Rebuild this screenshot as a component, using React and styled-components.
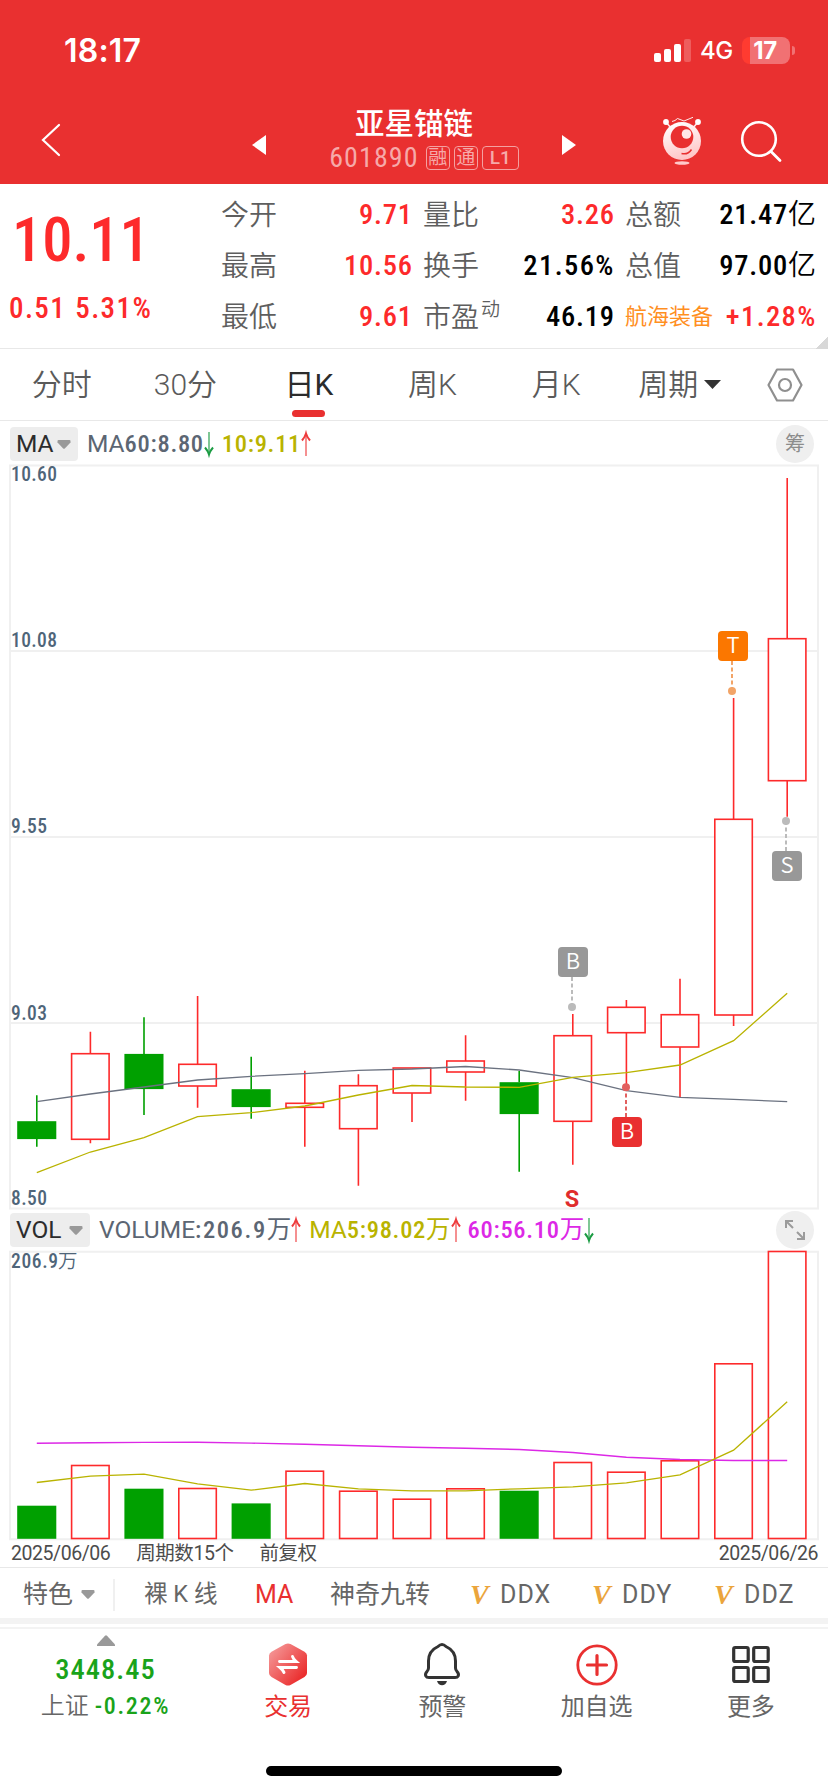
import React from 'react';
import styled, { createGlobalStyle, css } from 'styled-components';

const RED = '#fd2a2b';
const GREEN = '#00a000';
const OLIVE = '#b9b300';
const SLATE = '#5c6673';
const PURPLE = '#dc28e6';

const GlobalStyle = createGlobalStyle`
  * {
    box-sizing: border-box;
  }

  body {
    margin: 0;
    background: #fff;
    font-family: Roboto, 'Noto Sans CJK SC', sans-serif;
    line-height: 1.2;
    color: #666;
    white-space: nowrap;
  }

  svg {
    display: block;
    flex-shrink: 0;
    overflow: visible;
  }
`;

// narrow digits, used for every price and volume
const digits = css`
  font-stretch: 87%;
  font-weight: 500;
`;

const Screen = styled.div`
  width: 828px;
  height: 1792px;
  display: flex;
  flex-direction: column;
  overflow: hidden;
`;

/* ---- header ---- */

const Header = styled.header`
  height: 184px;
  background: #e93030;
  color: #fff;
`;

const StatusBar = styled.div`
  height: 98px;
  padding: 3px 33px 0 64px;
  display: flex;
  align-items: center;
  font-family: Inter, sans-serif;
`;

const Clock = styled.div`
  flex: 1;
  padding-top: 1px;
  font-size: 32px;
  font-weight: 600;
  letter-spacing: 0.2px;
`;

const Network = styled.div`
  margin: 1px 9px 0 9px;
  font-size: 24px;
  font-weight: 500;
  letter-spacing: -0.3px;
`;

const Battery = styled.div`
  width: 48px;
  height: 27px;
  margin-top: -1px;
  border-radius: 8px;
  background: linear-gradient(90deg, #ff3b30 8px, #f17173 8px);
  font-size: 24px;
  font-weight: 700;
  line-height: 27px;
  text-align: center;
  letter-spacing: -0.5px;
  padding-right: 2px;
`;

const BatteryCap = styled.div`
  width: 3px;
  height: 9px;
  margin-left: 2px;
  border-radius: 0 4px 4px 0;
  background: #f17173;
`;

const TitleBar = styled.div`
  height: 86px;
  display: grid;
  grid-template-columns: 252px 14px 296px 14px 1fr 126px;
  align-items: center;
`;

const BackCell = styled.div`
  padding-left: 41px;
`;

const StockTitle = styled.div`
  text-align: center;
  padding-bottom: 3px;
`;

const StockName = styled.div`
  height: 36px;
  font-size: 29.5px;
  font-weight: 500;
  line-height: 36px;
`;

const StockCode = styled.div`
  display: flex;
  justify-content: center;
  align-items: center;
  height: 31px;
  font-size: 28px;
  font-stretch: 87%;
  padding-left: 20px;
  color: #f6a9a9;
  letter-spacing: 1.1px;
`;

const Tag = styled.span`
  height: 24px;
  margin-left: 4px;
  padding: 0 ${(p) => (p.$wide ? 7 : 1.5)}px;
  border: 1px solid #f4a0a0;
  border-radius: 4px;
  font-size: 19px;
  font-stretch: 100%;
  font-weight: ${(p) => (p.$wide ? 500 : 400)};
  line-height: 22px;
  letter-spacing: 0;

  &:first-of-type {
    margin-left: 7px;
  }
`;

const ActionCell = styled.div`
  display: flex;
  justify-content: ${(p) => (p.$end ? 'flex-end' : 'flex-start')};
  padding-left: ${(p) => (p.$end ? 0 : 39)}px;
`;

/* ---- quote ---- */

const Quote = styled.section`
  position: relative;
  height: 165px;
  display: flex;
  border-bottom: 1px solid #e8e8e8;
`;

const PriceBox = styled.div`
  width: 221px;
  padding-left: 9px;
  color: ${RED};
`;

const Price = styled.div`
  ${digits}
  height: 64px;
  margin-top: 25px;
  padding-left: 3px;
  font-size: 60.5px;
  line-height: 64px;
`;

const Change = styled.div`
  ${digits}
  margin-top: 17px;
  font-size: 29px;
  line-height: 36px;
  letter-spacing: 1.4px;
  word-spacing: 1px;
`;

const QuoteGrid = styled.div`
  display: grid;
  grid-template-columns: repeat(3, 190px);
  grid-auto-rows: 51px;
  column-gap: 12px;
  padding-top: 6px;
`;

const QuoteItem = styled.div`
  display: flex;
  justify-content: space-between;
  align-items: center;
`;

const QuoteLabel = styled.span`
  font-size: ${(p) => (p.$sector ? 22 : 28)}px;
  font-weight: ${(p) => (p.$sector ? 400 : 350)};
  color: ${(p) => (p.$sector ? '#ff8f1f' : '#5e5e5e')};

  sup {
    font-size: 19px;
    line-height: 0;
    margin-left: 2px;
  }
`;

const QuoteValue = styled.span`
  ${digits}
  margin-right: -1.8px;
  font-size: 28.5px;
  letter-spacing: ${(p) => (p.$percent ? 1.4 : 0.75)}px;
  color: ${(p) => (p.$up ? RED : '#000')};
`;

const Unit = styled.span`
  font-size: 28px;
  font-weight: 350;
`;

const Corner = styled.div`
  position: absolute;
  right: 0;
  bottom: -1px;
  width: 13px;
  height: 13px;
  background: linear-gradient(135deg, transparent 50%, #d8d8d8 50%);
`;

/* ---- period tabs ---- */

const Tabs = styled.nav`
  height: 72px;
  display: flex;
  align-items: center;
  border-bottom: 1px solid #e8e8e8;
`;

const Tab = styled.div`
  position: relative;
  width: 123.6px;
  height: 71px;
  display: flex;
  align-items: center;
  justify-content: center;
  gap: 6px;
  font-size: 30px;
  font-weight: 350;
  color: #5a5a5a;

  ${(p) =>
    p.$active &&
    css`
      font-weight: 400;
      color: #2c2c2c;

      &::after {
        content: '';
        position: absolute;
        left: 45px;
        bottom: 3px;
        width: 33px;
        height: 7px;
        border-radius: 4px;
        background: #e93030;
      }
    `}
`;

const TabIcon = styled.div`
  flex: 1;
  display: flex;
  justify-content: center;
`;

/* ---- indicator rows ---- */

const IndicatorRow = styled.div`
  height: ${(p) => p.$height}px;
  padding: ${(p) => p.$top || 0}px 14px 0 10px;
  display: flex;
  align-items: center;
  font-size: 24.5px;
`;

const Picker = styled.div`
  width: ${(p) => p.$width}px;
  height: 34px;
  padding: 0 7px 0 6px;
  margin-right: 9px;
  display: flex;
  align-items: center;
  justify-content: space-between;
  border-radius: 4px;
  background: #ededed;
  color: #2c2c2c;
`;

const Reading = styled.div`
  display: flex;
  align-items: center;
  margin-right: ${(p) => p.$gap ?? 8}px;
  font-weight: ${(p) => (p.$strong ? 500 : 400)};
  color: ${(p) => p.$color};
`;

const ReadingValue = styled.span`
  ${digits}
  letter-spacing: ${(p) => p.$spacing ?? 0.7}px;
`;

const RoundButton = styled.div`
  position: relative;
  z-index: 1;
  width: 38px;
  height: 38px;
  margin-left: auto;
  display: flex;
  align-items: center;
  justify-content: center;
  border-radius: 50%;
  background: #efefef;
  font-size: 20px;
  color: #8c8c8c;
`;

/* ---- dates and features ---- */

const DateRow = styled.div`
  height: 28px;
  padding: 0 10px 0 11px;
  display: flex;
  align-items: center;
  font-size: 19.5px;
  font-weight: 400;
  letter-spacing: -0.45px;
  color: #4c4c4c;
  border-bottom: 1px solid #e8e8e8;

  span + span {
    margin-left: 26px;
  }

  span:last-child {
    margin-left: auto;
  }
`;

const FeatureRow = styled.div`
  height: 50px;
  padding: 3px 0 0 23px;
  display: flex;
  align-items: center;
  font-size: 25px;
  color: #666;
`;

const Special = styled.div`
  width: 92px;
  height: 32px;
  margin-right: 29px;
  display: flex;
  align-items: center;
  gap: 8px;
  border-right: 2px solid #f0f0f0;
`;

const Feature = styled.div`
  display: flex;
  flex-shrink: 0;
  align-items: center;
  width: ${(p) => p.$width}px;
  font-size: ${(p) => p.$size || 25}px;
  letter-spacing: ${(p) => p.$spacing || 0}px;
  color: ${(p) => (p.$active ? '#e93030' : 'inherit')};
`;

const VipMark = styled.span`
  width: 30px;
  font-family: 'Liberation Serif', serif;
  font-size: 28px;
  font-weight: 700;
  font-style: italic;
  color: #eba53c;
`;

const Divider = styled.div`
  height: 11px;
  border-top: 6px solid #f3f3f3;
  border-bottom: 2px solid #f3f3f3;
`;

/* ---- bottom nav ---- */

const BottomNav = styled.nav`
  flex: 1;
  display: grid;
  grid-template-columns: 211px repeat(4, 1fr);
  align-items: start;
`;

const IndexBox = styled.div`
  display: flex;
  flex-direction: column;
  align-items: center;
  padding-top: 6px;
`;

const IndexValue = styled.div`
  ${digits}
  height: 40px;
  margin-top: 4px;
  font-size: 28.5px;
  line-height: 40px;
  letter-spacing: 1px;
  color: #1aa31a;
`;

const IndexChange = styled.div`
  margin-top: -1px;
  font-size: 24px;
  font-weight: 350;
  line-height: 34px;

  b {
    ${digits}
    letter-spacing: 1.7px;
    color: #1aa31a;
  }
`;

const NavItem = styled.div`
  display: flex;
  flex-direction: column;
  align-items: center;
  padding-top: 14px;
  font-size: 24px;
  line-height: 34px;
  color: ${(p) => (p.$active ? '#e93030' : '#666')};

  svg {
    margin-bottom: 4px;
  }
`;

const HomeBar = styled.div`
  width: 296px;
  height: 10px;
  margin: 0 auto 16px;
  border-radius: 5px;
  background: #000;
`;

/* ---- data ---- */

const QUOTES = [
  { label: '今开', value: '9.71', up: true },
  { label: '量比', value: '3.26', up: true },
  { label: '总额', value: '21.47', unit: '亿' },
  { label: '最高', value: '10.56', up: true },
  { label: '换手', value: '21.56%' },
  { label: '总值', value: '97.00', unit: '亿' },
  { label: '最低', value: '9.61', up: true },
  { label: '市盈', sup: '动', value: '46.19' },
  { label: '航海装备', value: '+1.28%', up: true, sector: true },
];

// high, body top, body bottom, low, volume top, falling day
const CANDLES = [
  [1095.3, 1121.3, 1139, 1146.7, 1505.3, true],
  [1031.7, 1053.7, 1139.3, 1143.3, 1465],
  [1017.3, 1054, 1089, 1115, 1488.3, true],
  [996, 1064.3, 1086, 1107.7, 1488],
  [1056.7, 1089.3, 1107, 1118.7, 1503, true],
  [1070.7, 1103.3, 1107.3, 1146.7, 1470.7],
  [1074.3, 1085.7, 1128.7, 1185.7, 1490.7],
  [1068, 1068, 1093, 1122, 1498.7],
  [1035.3, 1061, 1072, 1100.7, 1488.3],
  [1071, 1082.3, 1114, 1171.7, 1490.3, true],
  [1014, 1035.7, 1121.3, 1164.7, 1462],
  [1000, 1007.3, 1032.7, 1087, 1471.7],
  [978.7, 1014.7, 1047, 1097.3, 1460.3],
  [698, 819.3, 1015, 1026, 1363.3],
  [478, 638.7, 780.7, 816.7, 1251],
];

const MA60 = [
  1101.7, 1094, 1087, 1080, 1076.3, 1073.7, 1070.3, 1069, 1066.5, 1070, 1077.7,
  1090.7, 1097.3, 1099.3, 1101.7,
];
const MA10 = [
  1172.7, 1152, 1137.7, 1116.7, 1112.7, 1106, 1095, 1085.5, 1087, 1087.3,
  1077.3, 1072.7, 1065, 1040.7, 993.3,
];
const VOL5 = [
  1482, 1475.7, 1473.7, 1483.3, 1489.7, 1483, 1488.3, 1490.3, 1490.3, 1488.3,
  1486.3, 1482.3, 1474.3, 1449.7, 1401.3,
];
const VOL60 = [
  1442.8, 1442.3, 1441.9, 1441.8, 1442.6, 1443.7, 1445.2, 1446.7, 1447.7, 1449,
  1452, 1456.7, 1459, 1460, 1460,
];

const AXIS = [
  ['10.60', 481, 46],
  ['10.08', 647, 46],
  ['9.55', 833, 36],
  ['9.03', 1019.5, 36],
  ['8.50', 1205, 36],
];

const cx = (i) => 36.8 + i * 53.6;
const points = (list) => list.map((y, i) => `${cx(i)},${y}`).join(' ');

/* ---- icons ---- */

const Caret = () => (
  <svg width="14" height="9" viewBox="0 0 14 9">
    <path d="M0.5 1Q0.5 0 1.5 0H12.5Q13.5 0 13.5 1V2.5L7.8 8.4Q7 9 6.2 8.4L0.5 2.5Z" fill="#999" />
  </svg>
);

const Arrow = ({ up }) => (
  <svg width="10" height="26" viewBox="0 0 10 26" fill="none">
    <g transform={up ? undefined : 'rotate(180 5 13)'}>
      <path d="M5 3V25" stroke={up ? '#f59091' : '#7fc795'} strokeWidth="2" />
      <path d="M1 9.5Q4 6 5 2.5Q6 6 9 9.5" stroke={up ? '#ee3b3c' : '#1b9c43'} strokeWidth="2" />
    </g>
  </svg>
);

const SignalIcon = () => (
  <svg width="37" height="23" viewBox="0 0 37 23" fill="#fff">
    <rect x="0" y="14" width="7" height="9" rx="2" />
    <rect x="10" y="10" width="7" height="13" rx="2" />
    <rect x="20" y="5" width="7" height="18" rx="2" />
    <rect x="30" y="0" width="7" height="23" rx="2" opacity="0.22" />
  </svg>
);

const RobotIcon = () => (
  <svg width="40" height="50" viewBox="0 0 40 50">
    <defs>
      <linearGradient id="robot" x1="0.3" y1="0" x2="0.6" y2="1">
        <stop offset="0" stopColor="#fff" />
        <stop offset="1" stopColor="#ffc3c4" />
      </linearGradient>
    </defs>
    <path d="M4 6L9 12M36 6L31 12" stroke="#ffe9e9" strokeWidth="1.6" />
    <circle cx="4" cy="6" r="2.9" fill="#fff" />
    <circle cx="36" cy="6" r="2.9" fill="#fff" />
    <path d="M10 5.5L13 4.5L15.5 2.5L22 5L31 1.3" fill="none" stroke="#fff" strokeWidth="0.9" />
    <circle cx="20" cy="25" r="19" fill="url(#robot)" />
    <circle cx="20" cy="21" r="11.3" fill="#e93030" />
    <circle cx="24.5" cy="18" r="4.8" fill="#ffe9e9" />
    <path d="M19.5 37.5Q26 39 29.5 33.5" fill="none" stroke="#e93030" strokeWidth="1.5" />
    <ellipse cx="20" cy="47" rx="7.5" ry="1.7" fill="#ffc9ca" />
  </svg>
);

const SearchIcon = () => (
  <svg width="40" height="41" viewBox="0 0 40 41" fill="none" stroke="#fff" strokeWidth="2.6">
    <circle cx="18" cy="18" r="16.8" />
    <path d="M30 30.5L39 39.5" strokeWidth="2.8" strokeLinecap="round" />
  </svg>
);

const ExpandIcon = () => (
  <svg width="20" height="20" viewBox="0 0 20 20" fill="none" stroke="#9b9b9b" strokeWidth="2">
    <path d="M1 8V1H8M1 1L8 8M12 19H19V12M19 19L12 12" />
  </svg>
);

const TradeIcon = () => (
  <svg width="38" height="43" viewBox="0 0 38 43">
    <defs>
      <linearGradient id="trade" x1="0" y1="0.1" x2="0.9" y2="0.9">
        <stop offset="0" stopColor="#f59c9c" />
        <stop offset="1" stopColor="#ea2626" />
      </linearGradient>
    </defs>
    <path
      d="M16.5 1Q19 -0.2 21.5 1L35.5 8.8Q38 10.3 38 12.5V30Q38 32.5 35.5 34L21.5 42Q19 43.2 16.5 42L2.5 34Q0 32.5 0 30V12.5Q0 10.3 2.5 8.8Z"
      fill="url(#trade)"
    />
    <path
      d="M10.5 18.5H27Q24.5 16.5 23.5 13.5M27.5 24.5H11Q13.5 26.5 15 29.5"
      fill="none"
      stroke="#fff"
      strokeWidth="2.9"
      strokeLinecap="round"
    />
  </svg>
);

const BellIcon = () => (
  <svg width="36" height="43" viewBox="0 0 36 43" fill="none" stroke="#333" strokeWidth="3">
    <path
      d="M14 3.5Q18 -0.5 22 3.5C28.5 6.5 31.5 12 31.5 18V25Q31.5 27 33 28.5C36 32 34 34.6 31 34.6H5C2 34.6 0 32 3 28.5Q4.5 27 4.5 25V18C4.5 12 7.5 6.5 14 3.5Z"
      strokeLinejoin="round"
    />
    <path d="M13 38H23Q21.5 42.3 18 42.3Q14.5 42.3 13 38Z" fill="#333" stroke="none" />
  </svg>
);

const AddIcon = () => (
  <svg width="42" height="43" viewBox="0 0 42 43" fill="none" stroke="#e93030" strokeWidth="2.8">
    <circle cx="21" cy="22" r="19.2" />
    <path d="M11.5 22H30.5M21 12.5V31.5" strokeWidth="3.2" strokeLinecap="round" />
  </svg>
);

const MoreIcon = () => (
  <svg width="38" height="43" viewBox="0 0 38 43" fill="none" stroke="#333" strokeWidth="3.2">
    <rect x="1.7" y="4.5" width="14.5" height="14" rx="1.5" />
    <rect x="21.7" y="4.5" width="14.5" height="14" rx="1.5" />
    <rect x="1.7" y="24.5" width="14.5" height="14" rx="1.5" />
    <rect x="21.7" y="24.5" width="14.5" height="14" rx="1.5" />
  </svg>
);

/* ---- charts ---- */

const Marker = ({ x, y, dotX, dotY, letter, color, light }) => (
  <g>
    <line
      x1={dotX}
      x2={dotX}
      y1={dotY > y ? y + 15 : y - 15}
      y2={dotY}
      stroke={light}
      strokeWidth="2"
      strokeDasharray="4 2.5"
    />
    <circle cx={dotX} cy={dotY} r="4" fill={light} />
    <rect x={x - 15} y={y - 15} width="30" height="30" rx="4" fill={color} />
    <text
      x={x}
      y={y + 7}
      fontSize="22"
      fontFamily="'Noto Sans CJK SC', sans-serif"
      fontWeight="350"
      fill="#fff"
      textAnchor="middle"
    >
      {letter}
    </text>
  </g>
);

const AxisText = styled.text`
  ${digits}
  font-size: 19.5px;
  fill: #4f6579;
`;

const PriceChart = () => (
  <svg width="828" height="744" viewBox="0 465 828 744">
    <g stroke="#f0f0f0" strokeWidth="2" fill="none">
      <path d="M10 465.5H818V1208.5H10Z" />
      <path d="M10 651H818M10 837H818M10 1023H818" />
    </g>
    {CANDLES.map(([high, top, bottom, low, , down], i) => (
      <g key={i} stroke={down ? GREEN : RED} strokeWidth="1.6">
        <path d={`M${cx(i)} ${high}V${top}M${cx(i)} ${bottom}V${low}`} />
        <rect
          x={cx(i) - 18.8}
          y={top + (down ? 0.7 : 0)}
          width="37.5"
          height={bottom - top - (down ? 1.4 : 0)}
          fill={down ? GREEN : '#fff'}
        />
      </g>
    ))}
    <polyline points={points(MA60)} fill="none" stroke="#6b7280" strokeWidth="1.3" />
    <polyline points={points(MA10)} fill="none" stroke={OLIVE} strokeWidth="1.3" />
    {AXIS.map(([label, y, width]) => (
      <AxisText key={label} x="11" y={y} textLength={width}>
        {label}
      </AxisText>
    ))}
    <Marker x={573} y={962} dotX={572} dotY={1007} letter="B" color="#989898" light="#bbb" />
    <Marker x={627} y={1132} dotX={626} dotY={1087.3} letter="B" color="#e93030" light="#e2605f" />
    <Marker x={733} y={646} dotX={732} dotY={691} letter="T" color="#fb7700" light="#f2a467" />
    <Marker x={787} y={866} dotX={786} dotY={821} letter="S" color="#989898" light="#bbb" />
    <text x="572" y="1207" fontSize="23.5" fontWeight="700" fill="#e02c2c" textAnchor="middle">
      S
    </text>
  </svg>
);

const VolumeChart = () => (
  <svg width="828" height="289" viewBox="0 1250.5 828 289">
    <path d="M10 1251.2H818V1538.7H10Z" fill="none" stroke="#f0f0f0" strokeWidth="2" />
    <AxisText x="11" y="1267" textLength="47">
      206.9
    </AxisText>
    <text x="58" y="1267" fontSize="19.5" fontWeight="350" fill="#4f6579">
      万
    </text>
    {CANDLES.map(([, , , , top, down], i) => (
      <rect
        key={i}
        x={cx(i) - 18.8}
        y={top + (down ? 0.7 : 0)}
        width="37.5"
        height={1538 - top - (down ? 1.2 : 0)}
        stroke={down ? GREEN : RED}
        strokeWidth="1.6"
        fill={down ? GREEN : '#fff'}
      />
    ))}
    <polyline points={points(VOL60)} fill="none" stroke={PURPLE} strokeWidth="1.4" />
    <polyline points={points(VOL5)} fill="none" stroke={OLIVE} strokeWidth="1.3" />
  </svg>
);

const App = () => (
  <Screen>
    <GlobalStyle />
    <Header>
      <StatusBar>
        <Clock>18:17</Clock>
        <SignalIcon />
        <Network>4G</Network>
        <Battery>17</Battery>
        <BatteryCap />
      </StatusBar>
      <TitleBar>
        <BackCell>
          <svg width="20" height="34" viewBox="0 0 20 34" fill="none" stroke="#fff" strokeWidth="2.2">
            <path d="M18 1L2 16L18 31" strokeLinecap="round" />
          </svg>
        </BackCell>
        <svg width="14" height="20" viewBox="0 0 14 20" fill="#fff">
          <path d="M14 4V24L0 14Z" />
        </svg>
        <StockTitle>
          <StockName>亚星锚链</StockName>
          <StockCode>
            601890<Tag>融</Tag>
            <Tag>通</Tag>
            <Tag $wide>L1</Tag>
          </StockCode>
        </StockTitle>
        <svg width="14" height="20" viewBox="0 0 14 20" fill="#fff">
          <path d="M0 4V24L14 14Z" />
        </svg>
        <ActionCell $end>
          <RobotIcon />
        </ActionCell>
        <ActionCell>
          <SearchIcon />
        </ActionCell>
      </TitleBar>
    </Header>

    <Quote>
      <PriceBox>
        <Price>10.11</Price>
        <Change>0.51 5.31%</Change>
      </PriceBox>
      <QuoteGrid>
        {QUOTES.map((q) => (
          <QuoteItem key={q.label}>
            <QuoteLabel $sector={q.sector}>
              {q.label}
              {q.sup && <sup>{q.sup}</sup>}
            </QuoteLabel>
            <QuoteValue $up={q.up} $percent={q.value.endsWith('%')}>
              {q.value}
              {q.unit && <Unit>{q.unit}</Unit>}
            </QuoteValue>
          </QuoteItem>
        ))}
      </QuoteGrid>
      <Corner />
    </Quote>

    <Tabs>
      <Tab>分时</Tab>
      <Tab>30分</Tab>
      <Tab $active>日K</Tab>
      <Tab>周K</Tab>
      <Tab>月K</Tab>
      <Tab>
        周期
        <svg width="17" height="9" viewBox="0 0 17 9">
          <path d="M0 0H17L8.5 9Z" fill="#333" />
        </svg>
      </Tab>
      <TabIcon>
        <svg width="36" height="34" viewBox="0 0 36 34" fill="none" stroke="#8f8f8f" strokeWidth="2.2">
          <path d="M10 1.5H26L34.5 17L26 32.5H10L1.5 17Z" strokeLinejoin="round" />
          <circle cx="18" cy="17" r="6" />
        </svg>
      </TabIcon>
    </Tabs>

    <IndicatorRow $height={44} $top={2}>
      <Picker $width={68}>
        MA
        <Caret />
      </Picker>
      <Reading $color={SLATE}>
        MA<ReadingValue>60:8.80</ReadingValue>
        <Arrow />
      </Reading>
      <Reading $color={OLIVE}>
        <ReadingValue>10:9.11</ReadingValue>
        <Arrow up />
      </Reading>
      <RoundButton>筹</RoundButton>
    </IndicatorRow>
    <PriceChart />
    <IndicatorRow $height={42}>
      <Picker $width={80}>
        VOL
        <Caret />
      </Picker>
      <Reading $color={SLATE}>
        VOLUME<ReadingValue $spacing={1.6}>:206.9</ReadingValue>万
        <Arrow up />
      </Reading>
      <Reading $color={OLIVE} $gap={7}>
        MA<ReadingValue>5:98.02</ReadingValue>万
        <Arrow up />
      </Reading>
      <Reading $color={PURPLE}>
        <ReadingValue>60:56.10</ReadingValue>万
        <Arrow />
      </Reading>
      <RoundButton>
        <ExpandIcon />
      </RoundButton>
    </IndicatorRow>
    <VolumeChart />

    <DateRow>
      <span>2025/06/06</span>
      <span>周期数15个</span>
      <span>前复权</span>
      <span>2025/06/26</span>
    </DateRow>
    <FeatureRow>
      <Special>
        特色
        <Caret />
      </Special>
      <Feature $width={111} $size={23.5}>
        裸 K 线
      </Feature>
      <Feature $width={75} $active>
        MA
      </Feature>
      <Feature $width={140}>神奇九转</Feature>
      <Feature $width={122} $spacing={1}>
        <VipMark>V</VipMark>DDX
      </Feature>
      <Feature $width={122} $spacing={1}>
        <VipMark>V</VipMark>DDY
      </Feature>
      <Feature $width={90} $spacing={1}>
        <VipMark>V</VipMark>DDZ
      </Feature>
    </FeatureRow>
    <Divider />

    <BottomNav>
      <IndexBox>
        <svg width="18" height="11" viewBox="0 0 18 11">
          <path d="M0 9.5L8 0.7Q9 -0.2 10 0.7L18 9.5V11H0Z" fill="#999" />
        </svg>
        <IndexValue>3448.45</IndexValue>
        <IndexChange>
          上证 <b>-0.22%</b>
        </IndexChange>
      </IndexBox>
      <NavItem $active>
        <TradeIcon />
        交易
      </NavItem>
      <NavItem>
        <BellIcon />
        预警
      </NavItem>
      <NavItem>
        <AddIcon />
        加自选
      </NavItem>
      <NavItem>
        <MoreIcon />
        更多
      </NavItem>
    </BottomNav>
    <HomeBar />
  </Screen>
);

export default App;
